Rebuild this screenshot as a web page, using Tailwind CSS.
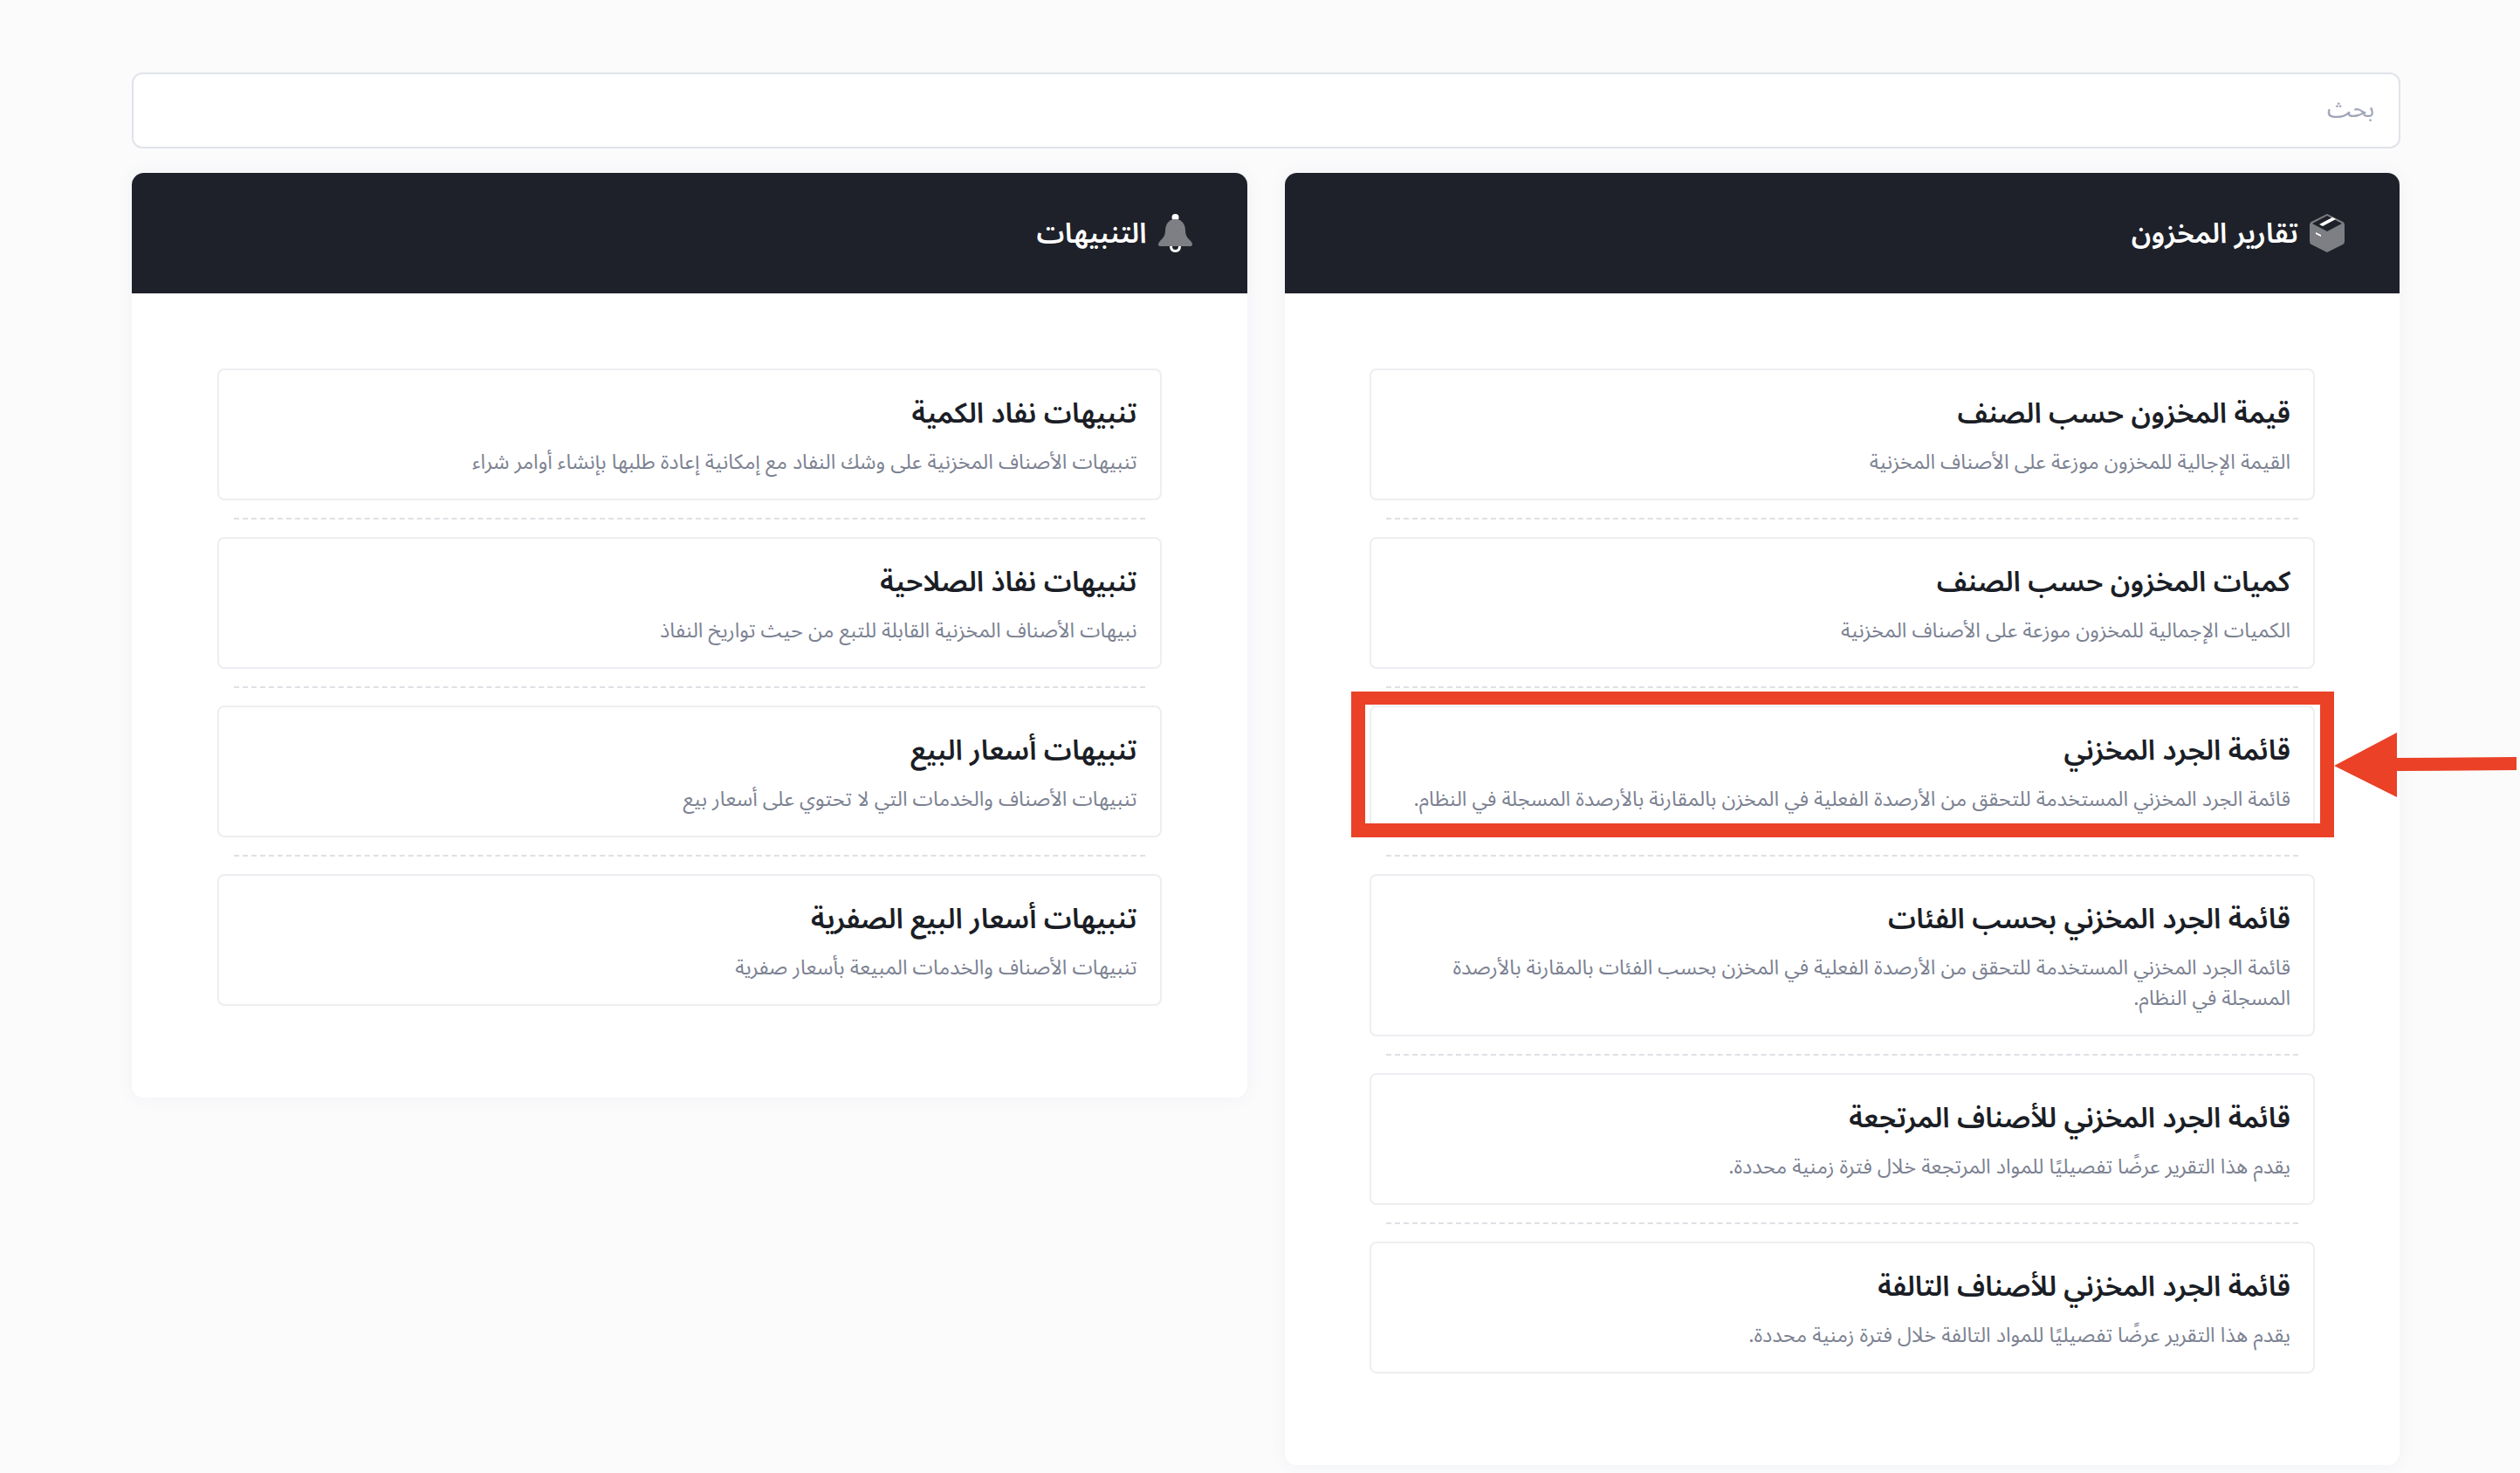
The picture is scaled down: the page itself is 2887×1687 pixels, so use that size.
<!DOCTYPE html>
<html lang="ar" dir="rtl">
<head>
  <meta charset="UTF-8" />
  <title>تقارير المخزون</title>
  <script src="https://cdn.jsdelivr.net/npm/@tailwindcss/browser@4"></script>
</head>
<body class="bg-[#fbfbfc] font-['Noto_Sans_Arabic','Inter','Noto_Sans',sans-serif]">
  <div class="relative w-[2887px] h-[1687px] overflow-hidden pt-[83px] pr-[137px] pl-[151px]">

    <!-- search -->
    <div class="h-[87px] bg-white border-2 border-[#e1e3ea] rounded-[12px] flex items-center px-[28px] text-[27px] text-[#a1a5b7]">بحث</div>

    <div class="mt-[28px] mr-[1px] grid grid-cols-2 gap-[43px] items-start">

      <!-- inventory reports -->
      <section class="bg-white rounded-[14px] shadow-[0_0_20px_rgba(76,87,125,0.06)]">
        <div class="h-[138px] bg-[#1e2129] rounded-t-[14px] flex items-center gap-[13px] pr-[63px] text-[32px] font-semibold text-white">
          <svg class="w-[40px] h-[44px] shrink-0" viewBox="0 0 40 44">
            <path d="M20 0 L38 9 Q40 10 40 13 V31 Q40 34 38 35 L20 44 L2 35 Q0 34 0 31 V13 Q0 10 2 9 Z" fill="#7e7f84"/>
            <path d="M20 2 L37 11 L20 20 L3 11 Z" fill="#1e2129"/>
            <path d="M11 12 L26 4 L30 6 L15 14 Z" fill="#fff"/>
            <path d="M7 21 L13 24 L13 26 L7 23 Z" fill="#fff"/>
          </svg>
          <span class="pt-[2px]">تقارير المخزون</span>
        </div>
        <div class="pt-[86px] pb-[105px] px-[97px]">
          <a class="block h-[151px] bg-white border-2 border-[#eceef1] rounded-[8px] px-[26px] pt-[26px]">
            <h3 class="text-[32px] leading-[48px] font-semibold text-[#1b1e26]">قيمة المخزون حسب الصنف</h3>
            <p class="mt-[14px] text-[23.5px] leading-[35px] text-[#7c8292]">القيمة الإجالية للمخزون موزعة على الأصناف المخزنية</p>
          </a>
          <div class="my-[20px] mx-[19px] border-t-2 border-dashed border-[#dfe0e5]"></div>
          <a class="block h-[151px] bg-white border-2 border-[#eceef1] rounded-[8px] px-[26px] pt-[26px]">
            <h3 class="text-[32px] leading-[48px] font-semibold text-[#1b1e26]">كميات المخزون حسب الصنف</h3>
            <p class="mt-[14px] text-[23.5px] leading-[35px] text-[#7c8292]">الكميات الإجمالية للمخزون موزعة على الأصناف المخزنية</p>
          </a>
          <div class="my-[20px] mx-[19px] border-t-2 border-dashed border-[#dfe0e5]"></div>
          <a class="block h-[151px] bg-white border-2 border-[#eceef1] rounded-[8px] px-[26px] pt-[26px]">
            <h3 class="text-[32px] leading-[48px] font-semibold text-[#1b1e26]">قائمة الجرد المخزني</h3>
            <p class="mt-[14px] text-[23.5px] leading-[35px] text-[#7c8292]">قائمة الجرد المخزني المستخدمة للتحقق من الأرصدة الفعلية في المخزن بالمقارنة بالأرصدة المسجلة في النظام.</p>
          </a>
          <div class="my-[20px] mx-[19px] border-t-2 border-dashed border-[#dfe0e5]"></div>
          <a class="block h-[186px] bg-white border-2 border-[#eceef1] rounded-[8px] px-[26px] pt-[26px]">
            <h3 class="text-[32px] leading-[48px] font-semibold text-[#1b1e26]">قائمة الجرد المخزني بحسب الفئات</h3>
            <p class="mt-[14px] text-[23.5px] leading-[35px] text-[#7c8292]">قائمة الجرد المخزني المستخدمة للتحقق من الأرصدة الفعلية في المخزن بحسب الفئات بالمقارنة بالأرصدة المسجلة في النظام.</p>
          </a>
          <div class="my-[20px] mx-[19px] border-t-2 border-dashed border-[#dfe0e5]"></div>
          <a class="block h-[151px] bg-white border-2 border-[#eceef1] rounded-[8px] px-[26px] pt-[26px]">
            <h3 class="text-[32px] leading-[48px] font-semibold text-[#1b1e26]">قائمة الجرد المخزني للأصناف المرتجعة</h3>
            <p class="mt-[14px] text-[23.5px] leading-[35px] text-[#7c8292]">يقدم هذا التقرير عرضًا تفصيليًا للمواد المرتجعة خلال فترة زمنية محددة.</p>
          </a>
          <div class="my-[20px] mx-[19px] border-t-2 border-dashed border-[#dfe0e5]"></div>
          <a class="block h-[151px] bg-white border-2 border-[#eceef1] rounded-[8px] px-[26px] pt-[26px]">
            <h3 class="text-[32px] leading-[48px] font-semibold text-[#1b1e26]">قائمة الجرد المخزني للأصناف التالفة</h3>
            <p class="mt-[14px] text-[23.5px] leading-[35px] text-[#7c8292]">يقدم هذا التقرير عرضًا تفصيليًا للمواد التالفة خلال فترة زمنية محددة.</p>
          </a>
        </div>
      </section>

      <!-- alerts -->
      <section class="bg-white rounded-[14px] shadow-[0_0_20px_rgba(76,87,125,0.06)]">
        <div class="h-[138px] bg-[#1e2129] rounded-t-[14px] flex items-center gap-[13px] pr-[63px] text-[32px] font-semibold text-white">
          <svg class="w-[39px] h-[44px] shrink-0" viewBox="0 0 39 44">
            <circle cx="19.5" cy="4" r="4" fill="#fff"/>
            <path d="M13 37 Q13 44 19.5 44 Q26 44 26 37 L23 37 Q23 41 19.5 41 Q16 41 16 37 Z" fill="#fff"/>
            <path d="M19.5 6 C27 6 31 12 31 19 C31 25 34 28 37 31 Q39 33 39 35 Q39 37 36 37 H3 Q0 37 0 35 Q0 33 2 31 C5 28 8 25 8 19 C8 12 12 6 19.5 6 Z" fill="#7e7f84"/>
          </svg>
          <span class="pt-[2px]">التنبيهات</span>
        </div>
        <div class="pt-[86px] pb-[105px] px-[98px]">
          <a class="block h-[151px] bg-white border-2 border-[#eceef1] rounded-[8px] px-[26px] pt-[26px]">
            <h3 class="text-[32px] leading-[48px] font-semibold text-[#1b1e26]">تنبيهات نفاد الكمية</h3>
            <p class="mt-[14px] text-[23.5px] leading-[35px] text-[#7c8292]">تنبيهات الأصناف المخزنية على وشك النفاد مع إمكانية إعادة طلبها بإنشاء أوامر شراء</p>
          </a>
          <div class="my-[20px] mx-[19px] border-t-2 border-dashed border-[#dfe0e5]"></div>
          <a class="block h-[151px] bg-white border-2 border-[#eceef1] rounded-[8px] px-[26px] pt-[26px]">
            <h3 class="text-[32px] leading-[48px] font-semibold text-[#1b1e26]">تنبيهات نفاذ الصلاحية</h3>
            <p class="mt-[14px] text-[23.5px] leading-[35px] text-[#7c8292]">نبيهات الأصناف المخزنية القابلة للتبع من حيث تواريخ النفاذ</p>
          </a>
          <div class="my-[20px] mx-[19px] border-t-2 border-dashed border-[#dfe0e5]"></div>
          <a class="block h-[151px] bg-white border-2 border-[#eceef1] rounded-[8px] px-[26px] pt-[26px]">
            <h3 class="text-[32px] leading-[48px] font-semibold text-[#1b1e26]">تنبيهات أسعار البيع</h3>
            <p class="mt-[14px] text-[23.5px] leading-[35px] text-[#7c8292]">تنبيهات الأصناف والخدمات التي لا تحتوي على أسعار بيع</p>
          </a>
          <div class="my-[20px] mx-[19px] border-t-2 border-dashed border-[#dfe0e5]"></div>
          <a class="block h-[151px] bg-white border-2 border-[#eceef1] rounded-[8px] px-[26px] pt-[26px]">
            <h3 class="text-[32px] leading-[48px] font-semibold text-[#1b1e26]">تنبيهات أسعار البيع الصفرية</h3>
            <p class="mt-[14px] text-[23.5px] leading-[35px] text-[#7c8292]">تنبيهات الأصناف والخدمات المبيعة بأسعار صفرية</p>
          </a>
        </div>
      </section>
    </div>

    <!-- annotation over the page -->
    <div class="absolute left-[1548px] top-[792px] w-[1126px] h-[167px] border-[#ea4127] border-x-[16px] border-t-[15px] border-b-[16px]"></div>
    <svg class="absolute left-[2674px] top-[839px] w-[209px] h-[74px]" viewBox="0 0 209 74">
      <path d="M0 38 L72 0 V29 L209 28 V43 L72 44 V74 Z" fill="#ea4127"/>
    </svg>
  </div>
</body>
</html>
